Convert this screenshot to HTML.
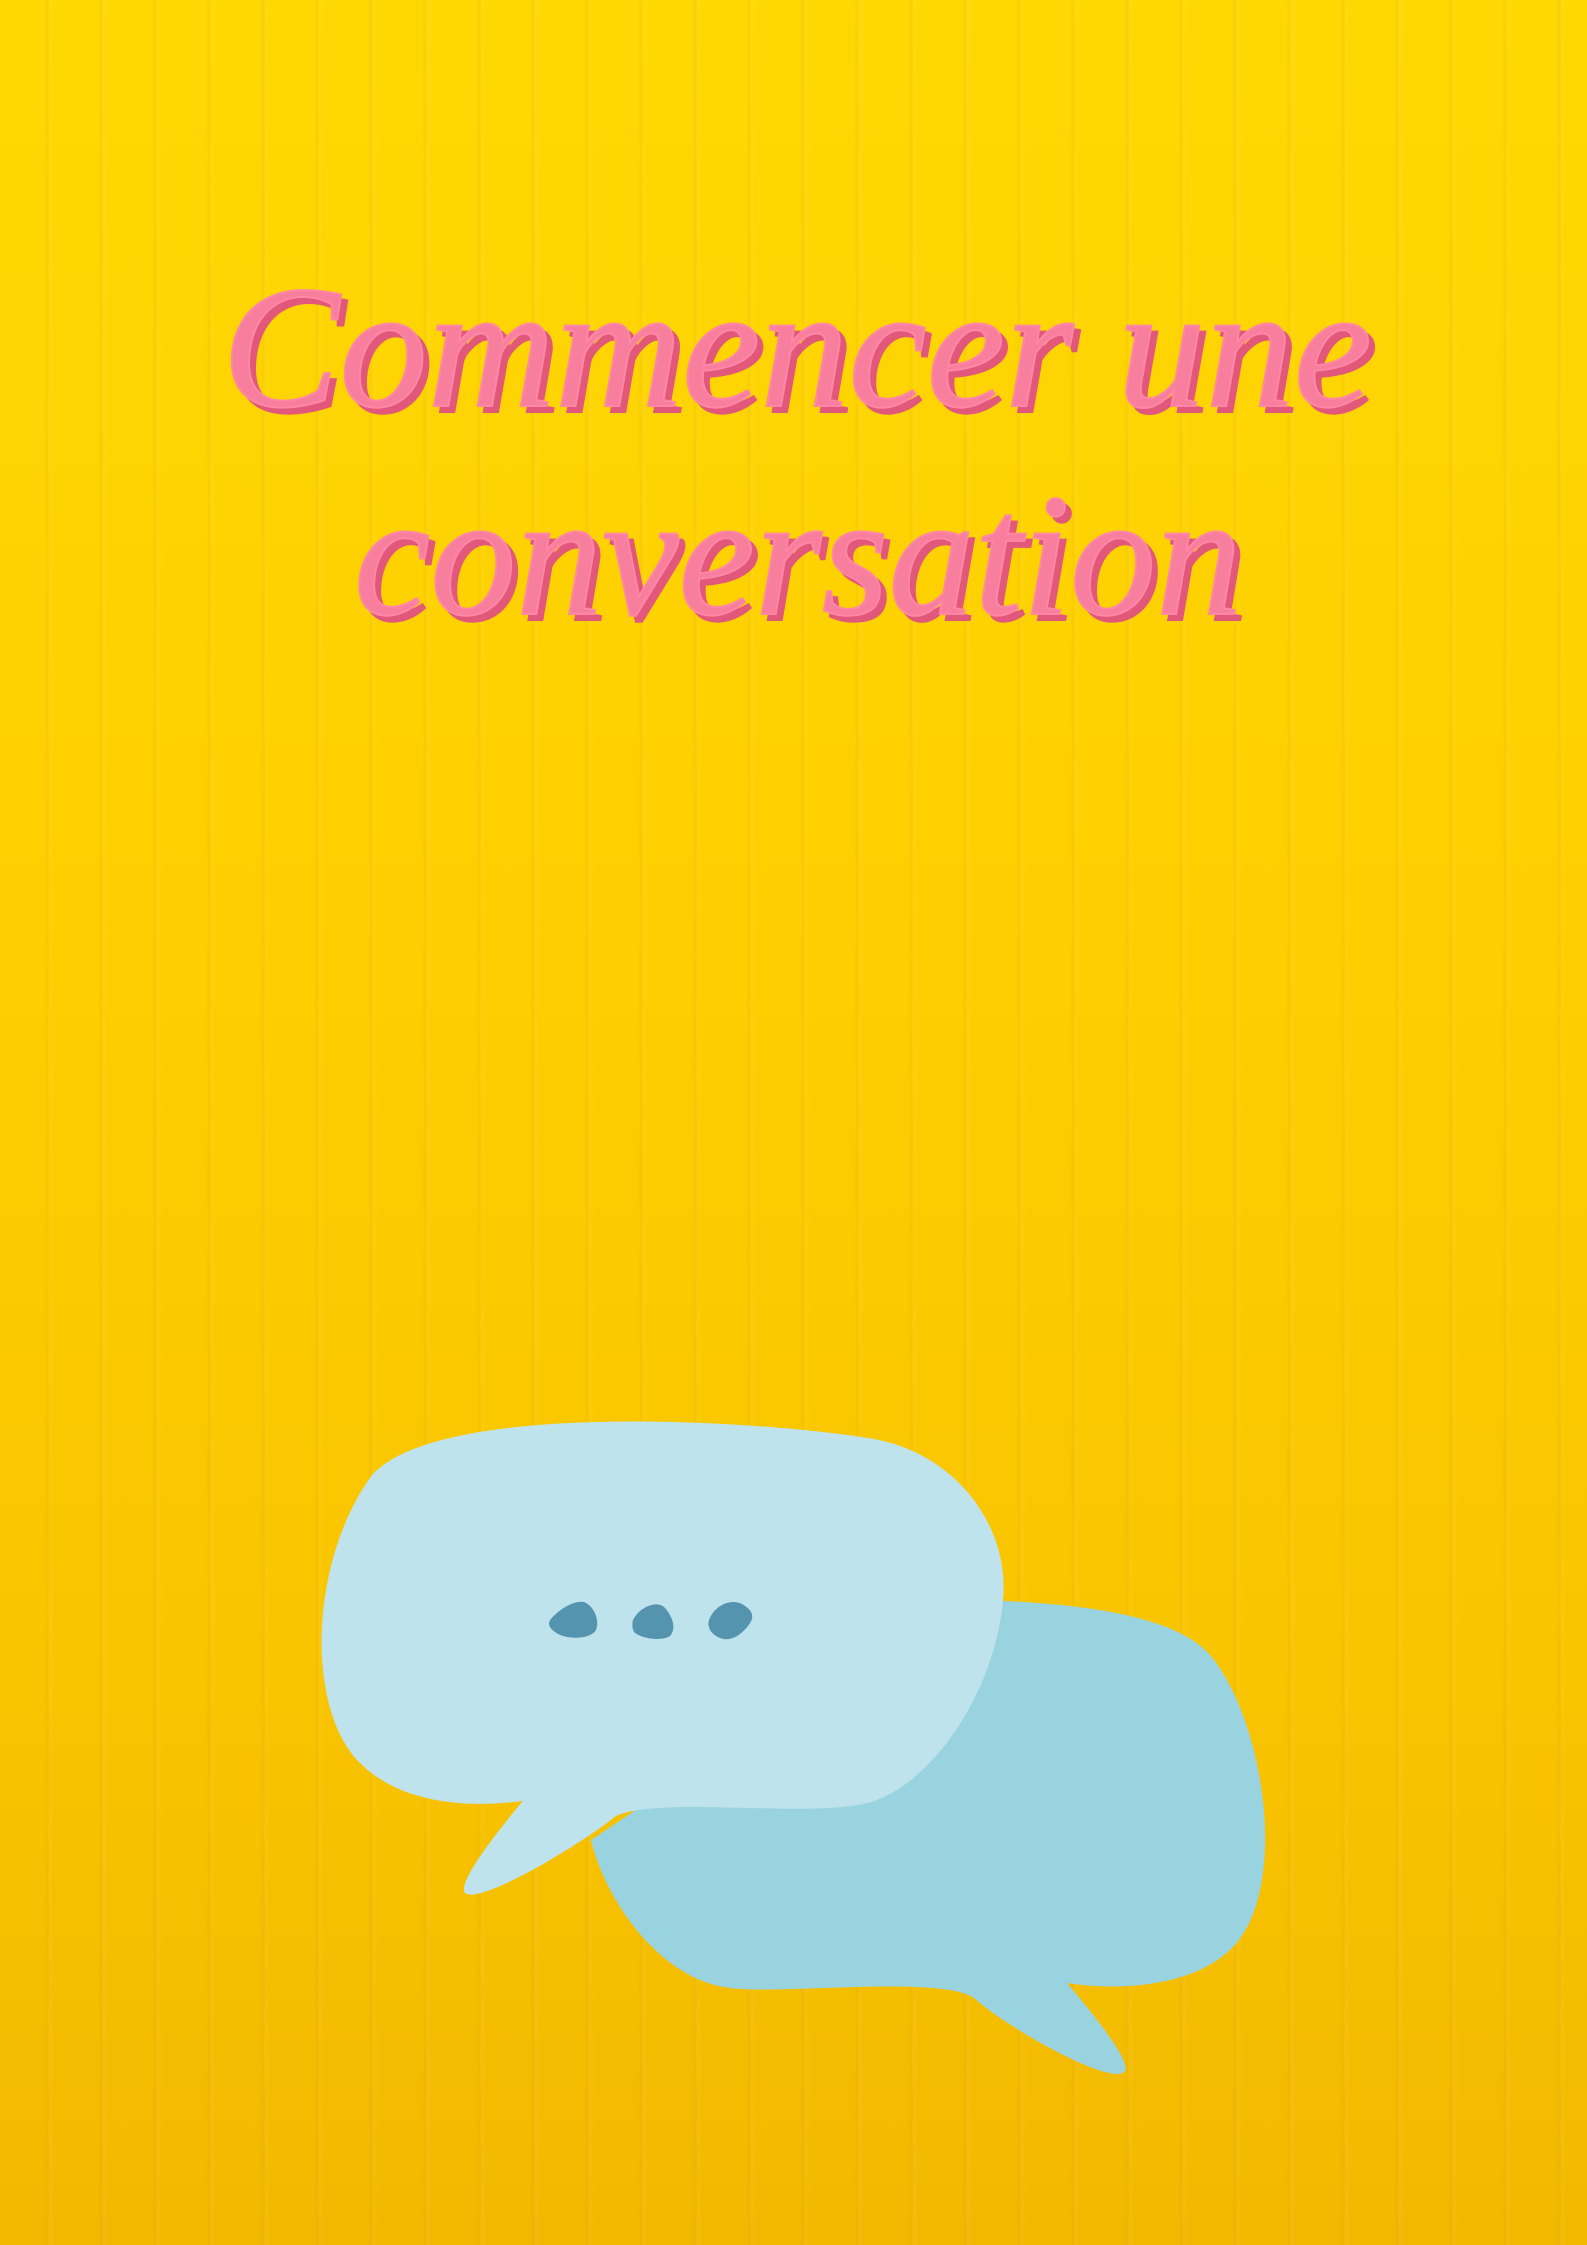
<!DOCTYPE html>
<html><head><meta charset="utf-8"><style>
html,body{margin:0;padding:0;}
body{width:1587px;height:2245px;overflow:hidden;position:relative;
background:linear-gradient(180deg,#FFD803 0%,#FECF00 40%,#F9C400 75%,#F2B800 100%);}
.ribs{position:absolute;inset:0;
background:repeating-linear-gradient(90deg,rgba(0,0,0,0) 0px,rgba(0,0,0,0) 44px,rgba(180,120,0,0.07) 47px,rgba(255,255,255,0.05) 50px,rgba(0,0,0,0) 54px);}
svg{position:absolute;left:0;top:0;}
</style></head><body>
<div class="ribs"></div>
<svg width="1587" height="2245" viewBox="0 0 1587 2245">
<g font-family="Liberation Serif, serif" font-style="italic" font-size="175" stroke-width="2">
<text x="228" y="412" textLength="1150" lengthAdjust="spacingAndGlyphs" stroke="#E2587A" fill="#E2587A">Commencer une</text>
<text x="222" y="406" textLength="1150" lengthAdjust="spacingAndGlyphs" stroke="#FF86A6" fill="#F87E9E">Commencer une</text>
<text x="360" y="620" textLength="888" lengthAdjust="spacingAndGlyphs" stroke="#E2587A" fill="#E2587A">conversation</text>
<text x="354" y="614" textLength="888" lengthAdjust="spacingAndGlyphs" stroke="#FF86A6" fill="#F87E9E">conversation</text>
</g>
<path fill="#9AD3E0" d="M1003,1601 C1100,1605 1180,1620 1210,1655 C1265,1720 1290,1890 1232,1948 C1190,1990 1110,1990 1067,1983 C1090,2010 1135,2065 1124,2072 C1110,2085 1010,2030 974,1998 C940,1975 780,1995 730,1988 C660,1980 605,1900 591,1840 L800,1700 Z"/>
<path fill="#BFE3EC" d="M372,1475 C440,1400 760,1420 874,1439 C960,1455 1010,1530 1003,1600 C995,1690 935,1780 874,1801 C820,1820 660,1795 616,1816 C580,1845 480,1905 465,1893 C455,1880 523,1801 523,1801 C470,1808 400,1805 358,1761 C305,1705 310,1560 372,1475Z"/>
<g fill="#5594AE">
<path d="M550,1620 C560,1608 575,1600 584,1602 C594,1606 600,1620 596,1630 C590,1640 565,1640 555,1632 C549,1628 548,1624 550,1620Z"/>
<path d="M633,1620 C640,1606 658,1600 665,1608 C672,1616 677,1628 670,1636 C660,1642 640,1638 634,1632 C632,1628 632,1624 633,1620Z"/>
<path d="M709,1620 C714,1606 730,1598 742,1604 C752,1610 756,1616 748,1626 C740,1636 730,1642 720,1638 C710,1634 707,1626 709,1620Z"/>
</g>
</svg>
</body></html>
